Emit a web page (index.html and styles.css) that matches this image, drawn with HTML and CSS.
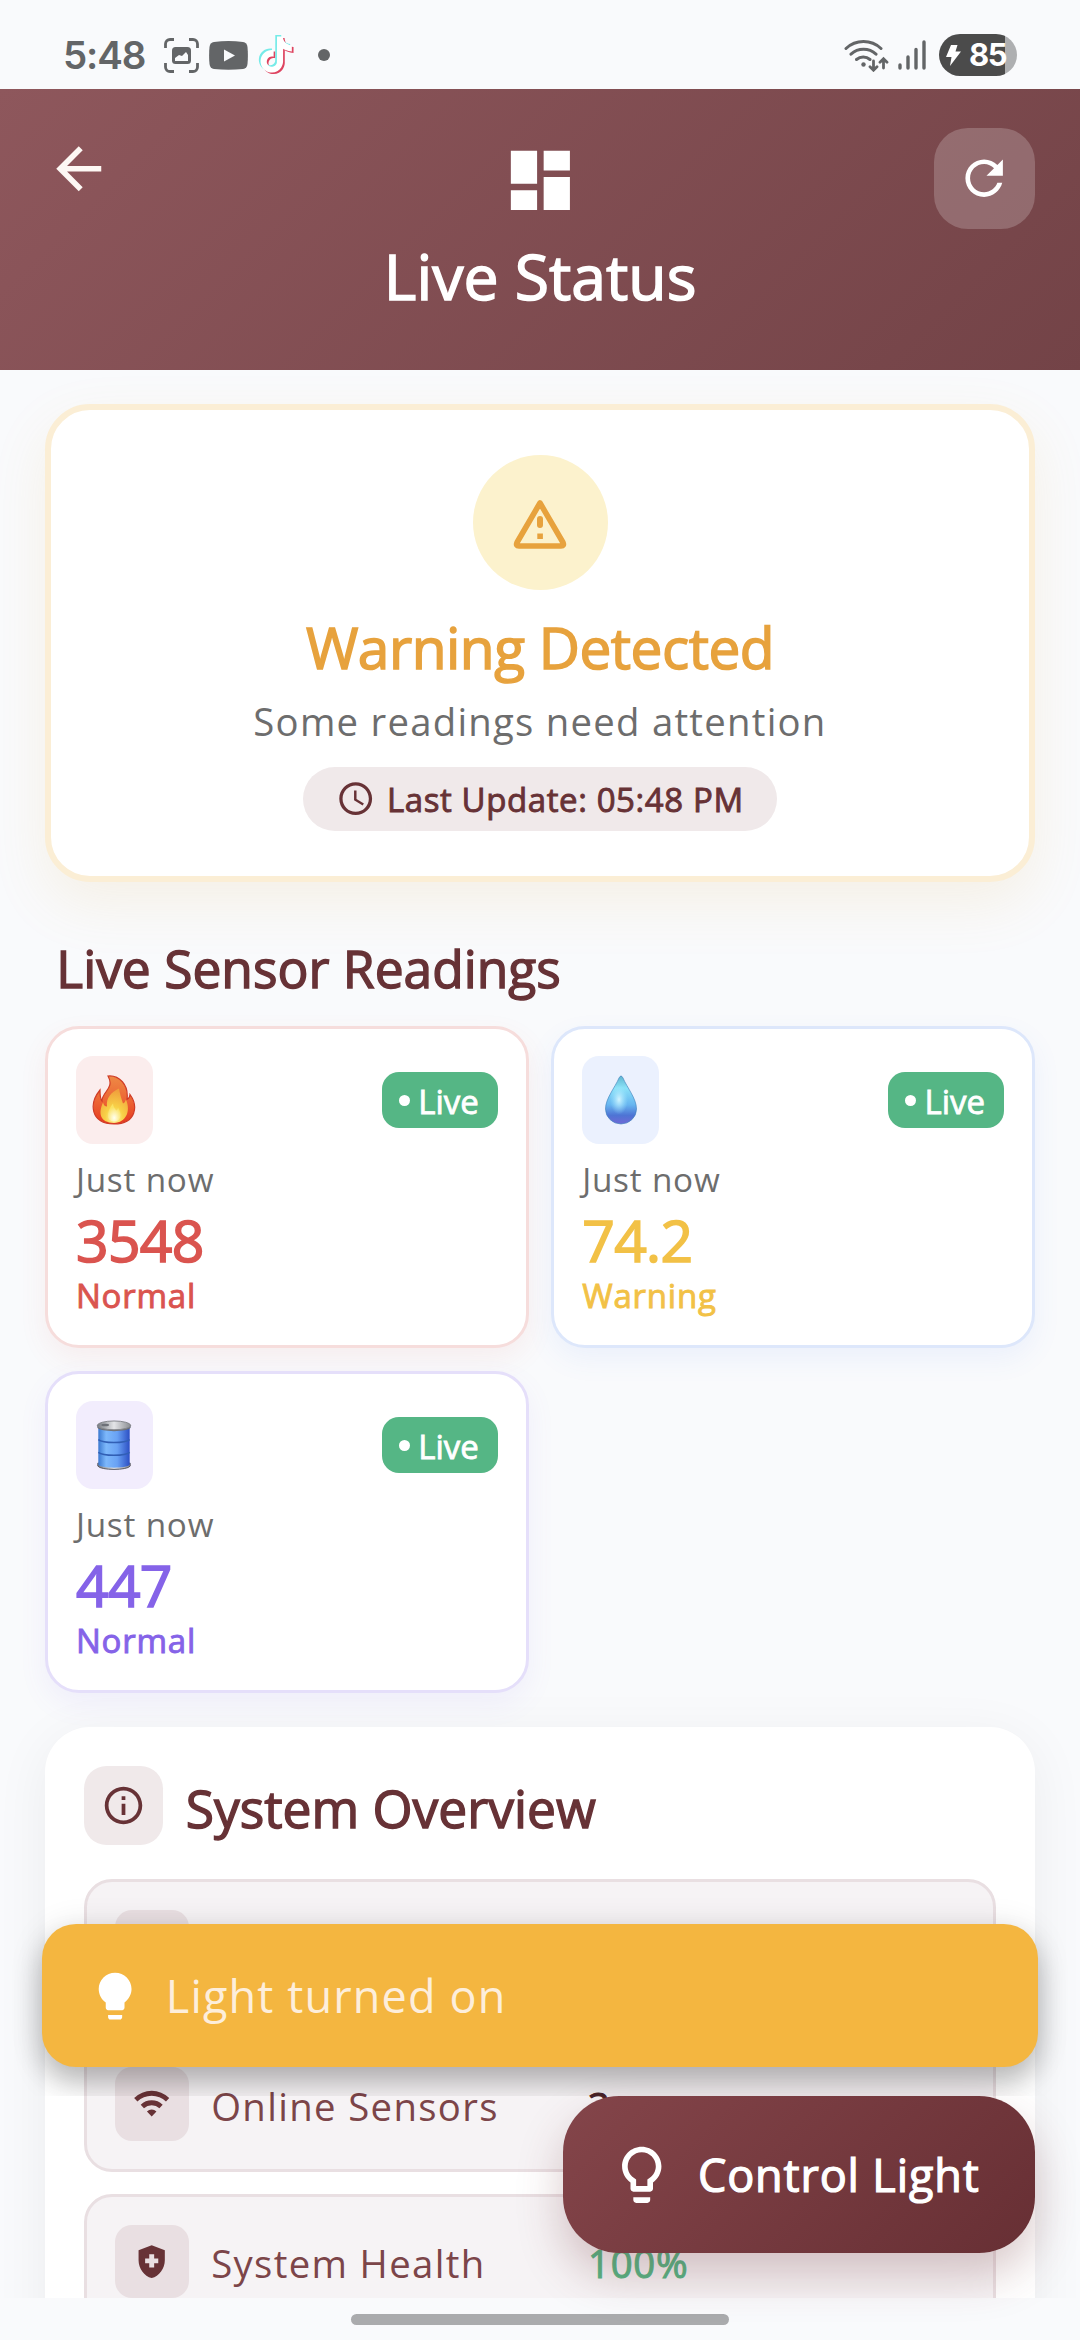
FILE: index.html
```
<!DOCTYPE html>
<html lang="en">
<head>
<meta charset="utf-8">
<title>Live Status</title>
<link rel="stylesheet" href="styles.css">
</head>
<body>
<div class="screen">
  <div class="statusbar">
    <div class="status-left">
      <span class="clock">5:48</span>
      <svg class="i-capture" viewBox="0 0 35 35"><path d="M1.500 10V6A4.500 4.500 0 0 1 6 1.500H10M25 1.500h4A4.500 4.500 0 0 1 33.500 6v4M33.500 25v4a4.500 4.500 0 0 1-4.500 4.500h-4M10 33.500H6A4.500 4.500 0 0 1 1.500 29v-4" fill="none" stroke="#636567" stroke-width="2.800"/><rect x="8" y="9" width="19" height="17" rx="3.500" fill="#636567"/><path d="M11 23v-3l4-3 3 1 4-4 2 3v6z" fill="#f9fafc"/></svg>
      <svg class="i-youtube" viewBox="0 0 39 29"><path d="M5 1Q19.500-.8 34 1q4 .5 4.500 5 .8 8.500 0 17-.5 4.500-4.500 5-14.500 1.600-29 0-4-.5-4.500-5-.8-8.500 0-17Q1 1.500 5 1z" fill="#636567"/><path d="M15 8.500v12l11-6z" fill="#f9fafc"/></svg>
      <svg class="i-tiktok" viewBox="0 0 36 40"><defs><path id="note" d="M12.525.02c1.31-.02 2.61-.01 3.91-.02.08 1.53.63 3.09 1.75 4.17 1.12 1.11 2.7 1.62 4.24 1.79v4.03c-1.44-.05-2.89-.35-4.2-.97-.57-.26-1.1-.59-1.62-.93-.01 2.92.01 5.84-.02 8.75-.08 1.4-.54 2.79-1.35 3.94-1.31 1.92-3.58 3.17-5.91 3.21-1.43.08-2.86-.31-4.08-1.03-2.02-1.19-3.44-3.37-3.65-5.71-.02-.5-.03-1-.01-1.49.18-1.9 1.12-3.72 2.58-4.96 1.66-1.44 3.98-2.13 6.15-1.72.02 1.48-.04 2.96-.04 4.44-.99-.32-2.15-.23-3.02.37-.63.41-1.11 1.04-1.36 1.75-.21.51-.15 1.07-.14 1.61.24 1.64 1.82 3.02 3.5 2.87 1.12-.01 2.19-.66 2.77-1.61.19-.33.4-.67.41-1.06.1-1.79.06-3.57.07-5.36.01-4.03-.01-8.05.02-12.07z"/></defs><use href="#note" fill="#de4460" transform="translate(1.900 3) scale(1.500)"/><use href="#note" fill="#76ebe8" transform="translate(-1.500 0) scale(1.500)"/><use href="#note" fill="#fff" transform="translate(.2 1.500) scale(1.500)"/></svg>
      <i class="more-dot"></i>
    </div>
    <div class="status-right">
      <svg class="i-wifi" viewBox="0 0 46 34"><g fill="none" stroke="#636567" stroke-width="3" stroke-linecap="round"><path d="M2 10.500a25.500 25.500 0 0 1 35 0M7 16.200a18.500 18.500 0 0 1 25 0M12.500 21.500a10.500 10.500 0 0 1 13.500 0"/><path d="M29.500 23v9M26 28.700l3.500 3.500 3.500-3.500M39.500 30v-9M36 24.200l3.500-3.500 3.500 3.500" stroke-width="2.800"/></g><circle cx="19.500" cy="26.500" r="2.200" fill="#636567"/></svg>
      <svg class="i-signal" viewBox="0 0 28 30"><path d="M2 25v3M10 17v11M18 9.500V28M26 2v26" stroke="#636567" stroke-width="3.400" stroke-linecap="round"/></svg>
      <div class="battery"><svg class="i-bolt" viewBox="0 0 15 21"><path d="M5 0h6.500L9.500 6.500H15L4 21l1.500-9H0z" fill="#fff"/></svg><span>85</span></div>
    </div>
  </div>

  <header class="header">
    <svg class="back" viewBox="0 0 24 24"><path fill="#fdf8f4" d="M20 11H7.830l5.590-5.590L12 4l-8 8 8 8 1.410-1.410L7.830 13H20v-2z"/></svg>
    <div class="brand">
      <svg class="i-dash" viewBox="0 0 24 24"><path fill="#fff" d="M3 13h8V3H3v10zm0 8h8v-6H3v6zm10 0h8V11h-8v10zm0-18v6h8V3h-8z"/></svg>
      <h1 class="title">Live Status</h1>
    </div>
    <button class="refresh"><svg viewBox="0 0 24 24"><path fill="#fff" d="M17.650 6.350C16.200 4.900 14.210 4 12 4c-4.420 0-7.990 3.580-7.990 8s3.570 8 7.990 8c3.730 0 6.840-2.550 7.730-6h-2.080c-.82 2.330-3.040 4-5.650 4-3.310 0-6-2.690-6-6s2.690-6 6-6c1.660 0 3.140.69 4.220 1.780L13 11h7V4l-2.350 2.350z"/></svg></button>
  </header>

  <main class="content">
    <section class="alert">
      <div class="alert-icon"><svg viewBox="0 0 54 50"><path d="M27 4 50 43.500q1.500 3.500-2 3.500H6q-3.500 0-2-3.500z" fill="none" stroke="#e7a23d" stroke-width="5.600" stroke-linejoin="round"/><path d="M24 20a3 3 0 0 1 6 0v6a3 3 0 0 1-6 0zM24.300 34.500h5.600v5.600h-5.600z" fill="#e7a23d"/></svg></div>
      <h2 class="alert-title">Warning Detected</h2>
      <p class="alert-text">Some readings need attention</p>
      <div class="pill"><svg viewBox="0 0 24 24"><path fill="#673236" d="M11.990 2C6.470 2 2 6.480 2 12s4.470 10 9.990 10C17.520 22 22 17.520 22 12S17.520 2 11.990 2zM12 20c-4.420 0-8-3.580-8-8s3.580-8 8-8 8 3.580 8 8-3.580 8-8 8zm.5-13H11v6l5.250 3.150.75-1.230-4.500-2.670z"/></svg><span>Last Update: 05:48 PM</span></div>
    </section>

    <h2 class="section-title">Live Sensor Readings</h2>
    <div class="sensors">
      <article class="sensor red">
        <div class="sensor-top">
          <div class="tile"><svg viewBox="0 0 44 49"><defs><linearGradient id="f1" x1="0" y1="0" x2="0" y2="1"><stop offset="0" stop-color="#ee8a45"/><stop offset=".55" stop-color="#ec6233"/><stop offset="1" stop-color="#e6391f"/></linearGradient><radialGradient id="f2" cx=".5" cy=".85" r=".8"><stop offset="0" stop-color="#fff9b0"/><stop offset=".4" stop-color="#f8d147"/><stop offset="1" stop-color="#f0a03c"/></radialGradient><radialGradient id="f3" cx=".5" cy=".8" r=".6"><stop offset="0" stop-color="#fffff0"/><stop offset="1" stop-color="#fbe263"/></radialGradient></defs><path d="M16 .5C27-.5 37 9 35 24c2-1 3-3 3-5 8 11 7 29-16 29.500C-2 48-3 28 8 14.500c0 5 0 9 2 11C10 16 23 13 16 .5z" fill="url(#f1)" stroke="#cf3b26" stroke-width="1.200"/><path d="M27 13c1 6 2 9 4 15 2-1 2-2 3-4 5 12 0 23-12 23.500C8 47 6 38 11 27c1 3 2 4 4 4-1-9 4-14 12-18z" fill="url(#f2)"/><path d="M21 28c0 3 2 5 3 7 1 0 2-2 2-3 5 8 2 14-4 14-8-.5-8-9-1-18z" fill="url(#f3)"/></svg></div>
          <div class="badge"><i></i><span>Live</span></div>
        </div>
        <p class="when">Just now</p><p class="value">3548</p><p class="state">Normal</p>
      </article>
      <article class="sensor blue">
        <div class="sensor-top">
          <div class="tile"><svg viewBox="0 0 44 49"><defs><linearGradient id="d1" x1="0" y1="0" x2="0" y2="1"><stop offset="0" stop-color="#5fb4cf"/><stop offset=".25" stop-color="#8be2f8"/><stop offset=".6" stop-color="#67b5f0"/><stop offset=".82" stop-color="#4e74d4"/><stop offset="1" stop-color="#7069d6"/></linearGradient><radialGradient id="d2"><stop offset="0" stop-color="#d2f4ff"/><stop offset="1" stop-color="#9be6ff" stop-opacity="0"/></radialGradient></defs><path d="M22 .5q1 0 2 2C28 12 37.500 23 37.500 33.500a15.500 15 0 0 1-31 0C6.500 23 16 12 20 2.500q1-2 2-2z" fill="url(#d1)" stroke="#3f83bd" stroke-opacity=".65" stroke-width="1"/><ellipse cx="20" cy="24" rx="9" ry="15" fill="url(#d2)"/></svg></div>
          <div class="badge"><i></i><span>Live</span></div>
        </div>
        <p class="when">Just now</p><p class="value">74.2</p><p class="state">Warning</p>
      </article>
      <article class="sensor violet">
        <div class="sensor-top">
          <div class="tile"><svg viewBox="0 0 44 51"><defs><linearGradient id="o1" x1="0" x2="1"><stop offset="0" stop-color="#3a78d0"/><stop offset=".25" stop-color="#7db8fb"/><stop offset=".6" stop-color="#69a2f4"/><stop offset="1" stop-color="#2c4fc4"/></linearGradient><linearGradient id="o2" x1="0" x2="1"><stop offset="0" stop-color="#777b82"/><stop offset=".5" stop-color="#e4e5e8"/><stop offset="1" stop-color="#8a8c92"/></linearGradient></defs><path d="M5.500 44v3c3 4.500 30 4.500 33 0v-3z" fill="url(#o2)" stroke="#55565e"/><path d="M6 6h32v40c-4 3.500-28 3.500-32 0z" fill="url(#o1)"/><path d="M6 20c5 4 27 4 32 0M6 33c5 4 27 4 32 0" fill="none" stroke="#315fb5" stroke-width="1.500"/><path d="M5 5v3c3 4.500 31 4.500 34 0V5z" fill="#6b6e75"/><ellipse cx="22" cy="5.500" rx="17" ry="4.500" fill="url(#o2)" stroke="#84868c"/><ellipse cx="13" cy="5" rx="4" ry="1.300" fill="#6d7078"/></svg></div>
          <div class="badge"><i></i><span>Live</span></div>
        </div>
        <p class="when">Just now</p><p class="value">447</p><p class="state">Normal</p>
      </article>
    </div>

    <section class="overview">
      <div class="overview-head">
        <div class="head-tile"><svg viewBox="0 0 24 24"><path fill="#673236" d="M11 7h2v2h-2zm0 4h2v6h-2zm1-9C6.480 2 2 6.480 2 12s4.480 10 10 10 10-4.480 10-10S17.520 2 12 2zm0 18c-4.410 0-8-3.590-8-8s3.590-8 8-8 8 3.590 8 8-3.590 8-8 8z"/></svg></div>
        <h2 class="overview-title">System Overview</h2>
      </div>
      <div class="rows">
        <div class="row"><div class="row-tile"></div></div>
        <div class="row">
          <div class="row-tile"><svg viewBox="0 0 24 24"><path fill="#673236" d="M1.300 8.500A15.300 15.300 0 0 1 22.700 8.500L20.700 10.700A12.300 12.300 0 0 0 3.300 10.700zM5.300 12.600A9.600 9.600 0 0 1 18.700 12.600L16.700 14.800A6.800 6.800 0 0 0 7.300 14.800zM9.100 16.700a4.300 4.300 0 0 1 5.800 0L12 19.800z"/></svg></div>
          <span class="label">Online Sensors</span><span class="result">3</span>
        </div>
        <div class="row">
          <div class="row-tile"><svg viewBox="0 0 24 24"><path fill="#673236" d="M10.500 13H8v-3h2.500V7.500h3V10H16v3h-2.500v2.500h-3V13zM12 2 4 5v6.090c0 5.050 3.410 9.760 8 10.910 4.590-1.150 8-5.860 8-10.910V5l-8-3z" fill-rule="evenodd"/></svg></div>
          <span class="label">System Health</span><span class="result good">100%</span>
        </div>
      </div>
    </section>
  </main>

  <footer class="navbar"><i class="handle"></i></footer>

  <div class="toast-layer">
    <div class="toast"><svg viewBox="0 0 24 24"><path fill="#fff" d="M9 21c0 .5.4 1 1 1h4c.6 0 1-.5 1-1v-1H9v1zm3-19C8.100 2 5 5.100 5 9c0 2.400 1.200 4.500 3 5.700V17c0 .5.4 1 1 1h6c.6 0 1-.5 1-1v-2.300c1.800-1.300 3-3.400 3-5.700 0-3.900-3.100-7-7-7z"/></svg><span>Light turned on</span></div>
  </div>
  <button class="fab"><svg viewBox="0 0 24 24"><path fill="#fff" d="M9 21c0 .55.45 1 1 1h4c.55 0 1-.45 1-1v-1H9v1zm3-19C8.140 2 5 5.140 5 9c0 2.380 1.190 4.470 3 5.740V17c0 .55.45 1 1 1h6c.55 0 1-.45 1-1v-2.260c1.810-1.270 3-3.360 3-5.740 0-3.860-3.140-7-7-7zm2.850 11.100-.85.6V16h-4v-2.300l-.85-.6C7.800 12.160 7 10.630 7 9c0-2.760 2.240-5 5-5s5 2.240 5 5c0 1.630-.8 3.160-2.150 4.100z"/></svg><span>Control Light</span></button>
</div>
</body>
</html>
```
FILE: styles.css
```
* { box-sizing: border-box; margin: 0; padding: 0; }
body { font-family: "Open Sans", "Noto Sans", sans-serif; font-weight: 400; background: #f9fafc; }
svg { display: block; flex: none; }
button { border: 0; font: inherit; }
h1, h2 { font-weight: 400; }

.screen { position: relative; width: 1080px; height: 2340px; overflow: hidden; display: flex; flex-direction: column; background: #f9fafc; }

/* system status bar */
.statusbar { height: 89px; flex: none; padding: 21px 63px 0 63px; display: flex; justify-content: space-between; color: #636567; }
.status-left, .status-right { display: flex; align-items: center; height: 68px; }
.clock { width: 101px; font: 600 38.500px/68px "Inter", sans-serif; letter-spacing: -1.100px; white-space: nowrap; }
.i-capture { width: 35px; height: 35px; margin-right: 10px; }
.i-youtube { width: 39px; height: 29px; margin-right: 10px; }
.i-tiktok { width: 36px; height: 40px; margin-right: 24px; }
.more-dot { width: 12px; height: 12px; border-radius: 50%; background: #636567; }
.i-wifi { width: 46px; height: 34px; margin-right: 8px; }
.i-signal { width: 28px; height: 30px; margin-right: 13px; }
.battery { width: 78px; height: 42px; border-radius: 21px; padding-left: 7px; display: flex; align-items: center; gap: 8px; background: linear-gradient(90deg, #4b4b4b 66px, #aeafb1 66px); color: #fff; font: 700 31px/42px "Inter", sans-serif; letter-spacing: -1.500px; }
.i-bolt { width: 15px; height: 21px; }

/* header */
.header { height: 281px; flex: none; display: flex; justify-content: space-between; align-items: flex-start; padding: 39px 45px 0; background: linear-gradient(135deg, #8e575c 0%, #734347 100%); }
.back { width: 67.500px; height: 67.500px; margin-top: 6.500px; margin-right: 33.750px; }
.brand { display: flex; flex-direction: column; align-items: center; }
.i-dash { width: 78.750px; height: 78.750px; margin-top: 13px; }
.title { color: #fff; font-size: 62.500px; line-height: 88px; margin-top: 12px; letter-spacing: 0; -webkit-text-stroke: 1.500px #fff; }
.refresh { width: 101px; height: 101px; border-radius: 34px; background: rgba(255,255,255,.2); display: flex; align-items: center; justify-content: center; }
.refresh svg { width: 56.250px; height: 56.250px; }

.content { height: 1928px; flex: none; overflow: hidden; padding: 34px 45px 0; }

/* alert card */
.alert { height: 478px; border: 6px solid #fbeed5; border-radius: 45px; background: #fff; padding-top: 44.600px; display: flex; flex-direction: column; align-items: center; box-shadow: 0 22px 56px rgba(222,172,70,.12); }
.alert-icon { width: 135px; height: 135px; border-radius: 50%; background: #fcf2cd; display: flex; justify-content: center; align-items: center; }
.alert-icon svg { width: 54px; height: 50px; margin-top: 3px; }
.alert-title { font-size: 56.800px; line-height: 68px; margin-top: 23.600px; color: #e7a23d; letter-spacing: -.5px; -webkit-text-stroke: 1.500px #e7a23d; }
.alert-text { font-size: 38.300px; line-height: 52px; margin-top: 14px; color: #6d6d6d; letter-spacing: 1.250px; }
.pill { margin-top: 19.600px; height: 64.600px; border-radius: 33px; background: #f0e9ea; padding: 0 33.750px; display: flex; align-items: center; gap: 11.250px; color: #673236; font-size: 33px; letter-spacing: .6px; -webkit-text-stroke: .9px #673236; }
.pill svg { width: 39.400px; height: 39.400px; }

.section-title { margin: 47.500px 0 20.100px 11.250px; font-size: 51.500px; line-height: 76px; color: #673236; letter-spacing: 0; -webkit-text-stroke: 1.400px #673236; }

/* sensor cards */
.sensors { display: grid; grid-template-columns: 1fr 1fr; gap: 22.500px; }
.sensor { height: 322.500px; border: 3px solid; border-radius: 34px; background: #fff; padding: 27.900px; }
.red { border-color: #f6dddc; color: #da544f; box-shadow: 0 11px 28px rgba(218,84,79,.08); }
.blue { border-color: #dde7fb; color: #f2c146; box-shadow: 0 11px 28px rgba(80,130,240,.08); }
.violet { border-color: #e5dffa; color: #8563e8; box-shadow: 0 11px 28px rgba(133,99,232,.08); }
.sensor-top { display: flex; justify-content: space-between; align-items: center; }
.tile { width: 77px; height: 87.500px; border-radius: 17px; display: flex; align-items: center; justify-content: center; }
.tile svg { width: 44px; height: 50px; }
.red .tile { background: #fbeded; }
.blue .tile { background: #ebf1fe; }
.violet .tile { background: #f2edfd; }
.badge { height: 56.300px; width: 116px; border-radius: 17px; background: #55b685; color: #fff; display: flex; align-items: center; gap: 8px; padding-left: 17px; font-size: 33px; -webkit-text-stroke: .8px #fff; }
.badge i { width: 11.300px; height: 11.300px; border-radius: 50%; background: #fff; }
.badge span { line-height: 46px; padding-top: 3px; }
.when { margin-top: 12.500px; font-size: 33.300px; line-height: 46px; color: #6d6d6d; letter-spacing: .8px; }
.value { margin-top: 3.900px; font-size: 57px; line-height: 68px; -webkit-text-stroke: 1.600px currentColor; letter-spacing: -.6px; }
.state { margin-top: -.9px; font-size: 33px; line-height: 46px; -webkit-text-stroke: .9px currentColor; letter-spacing: .8px; }

/* overview */
.overview { margin-top: 34px; height: 700px; background: #fff; border-radius: 45px; padding: 39.400px; box-shadow: 0 11px 56px rgba(0,0,0,.06); }
.overview-head { display: flex; align-items: center; height: 79px; gap: 22.500px; }
.head-tile { width: 78.750px; height: 79px; border-radius: 22.500px; background: #f0e9ea; display: flex; align-items: center; justify-content: center; }
.head-tile svg { width: 45px; height: 45px; }
.overview-title { font-size: 51.500px; line-height: 76px; padding-top: 4px; color: #673236; letter-spacing: 0; -webkit-text-stroke: 1.400px #673236; }
.rows { margin-top: 33.700px; display: flex; flex-direction: column; gap: 22.500px; }
.row { height: 135px; border: 3px solid #e9dfe2; border-radius: 28px; background: #f6f3f5; padding: 27.900px; display: flex; align-items: center; }
.row-tile { width: 73.400px; height: 73.400px; margin-right: 22.500px; border-radius: 17px; background: #e9dfe2; display: flex; align-items: center; justify-content: center; flex: none; }
.row-tile svg { width: 39.400px; height: 39.400px; }
.label, .result { flex: 1; font-size: 38.300px; line-height: 52px; padding-top: 3.500px; }
.label { color: #7c4549; letter-spacing: 1.350px; }
.result { color: #4a2327; letter-spacing: .8px; -webkit-text-stroke: 1px currentColor; }
.good { color: #55b685; }

.navbar { height: 42px; flex: none; display: flex; justify-content: center; padding-top: 16px; }
.handle { width: 378px; height: 11px; border-radius: 6px; background: #aaabad; }

/* floating layers */
.toast-layer { position: absolute; left: 0; top: 1880px; width: 1080px; height: 216px; padding: 44px 42px 0; overflow: hidden; }
.toast { height: 143.400px; border-radius: 34px; background: #f4b640; display: flex; align-items: center; padding-left: 45px; gap: 22.500px; color: #fdeedb; font-size: 45px; letter-spacing: 1.150px; box-shadow: 0 17px 28px rgba(0,0,0,.22), 0 4px 34px rgba(0,0,0,.12); }
.toast svg { width: 56.250px; height: 56.250px; }
.fab { position: absolute; left: 563px; top: 2095.500px; width: 472px; height: 157.500px; border-radius: 56px; background: linear-gradient(135deg, #84454a, #672f34); display: flex; align-items: center; padding-left: 45px; gap: 22.500px; color: #fff; font-size: 45px; letter-spacing: .850px; -webkit-text-stroke: 1.200px #fff; box-shadow: 0 22px 45px rgba(107,47,52,.26); white-space: nowrap; }
.fab svg { width: 67.500px; height: 67.500px; }
```
